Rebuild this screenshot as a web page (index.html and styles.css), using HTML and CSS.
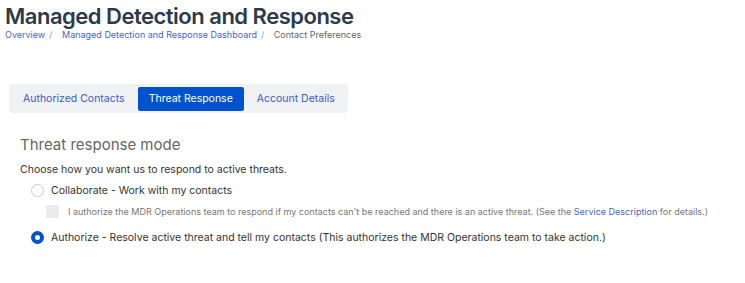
FILE: index.html
```html
<!DOCTYPE html>
<html lang="en">
<head>
    <meta charset="UTF-8">
    <meta name="viewport" content="width=device-width, initial-scale=1.0">
    <title>Contact Preferences</title>
    <link rel="stylesheet" href="styles.css">
</head>
<body>

    <!-- Page header -->
    <div class="page-header">
        <h1>Managed Detection and Response</h1>
        <div class="breadcrumb">
            <a href="#">Overview</a><span class="sep">/</span>
            <a href="#">Managed Detection and Response Dashboard</a><span class="sep">/</span>
            <span class="current">Contact Preferences</span>
        </div>
    </div>

    <!-- Tabs -->
    <div class="tabs">
        <button class="tab">Authorized Contacts</button>
        <button class="tab active">Threat Response</button>
        <button class="tab">Account Details</button>
    </div>

    <!-- Threat response mode -->
    <div class="section">
        <h2>Threat response mode</h2>
        <p class="hint">Choose how you want us to respond to active threats.</p>

        <label class="radio-row">
            <span class="radio"></span>
            Collaborate - Work with my contacts
        </label>

        <label class="check-row">
            <span class="checkbox"></span>
            <span>I authorize the MDR Operations team to respond if my contacts can't be reached and there is an active threat. (See the <a href="#">Service Description</a> for details.)</span>
        </label>

        <label class="radio-row">
            <span class="radio checked"></span>
            Authorize - Resolve active threat and tell my contacts (This authorizes the MDR Operations team to take action.)
        </label>
    </div>

</body>
</html>
```

FILE: styles.css
```css
/* General */
body {
    font-family: Inter, "Noto Sans", sans-serif;
    margin: 0;
    padding: 0;
    background-color: #ffffff;
    color: #333333;
}

a {
    color: #3a5bc7;
    text-decoration: none;
}

/* Header */
.page-header {
    padding: 3px 5px 0;
}

.page-header h1 {
    margin: 0;
    font-size: 22px;
    font-weight: 600;
    line-height: 26px;
    color: #2c3a4b;
    letter-spacing: -0.5px;
}

.breadcrumb {
    font-size: 9px;
    line-height: 12px;
    color: #666666;
}

.breadcrumb a {
    color: #4664c8;
}

.breadcrumb .sep {
    color: #999999;
    margin: 0 7px 0 4px;
}

/* Tabs */
.tabs {
    display: inline-flex;
    gap: 2px;
    margin: 43px 0 0 9px;
    padding: 3px 2px 2px 3px;
    background-color: #f0f1f3;
    border-radius: 4px;
}

.tab {
    font-family: inherit;
    font-size: 10.5px;
    line-height: 24px;
    padding: 0 11px;
    border: none;
    border-radius: 2px;
    background: transparent;
    color: #3b5cc4;
    white-space: nowrap;
    cursor: pointer;
}

.tab.active {
    background-color: #0053cc;
    color: #ffffff;
}

/* Section */
.section {
    padding: 22px 20px 0;
}

.section h2 {
    margin: 0;
    font-size: 15px;
    font-weight: 400;
    line-height: 20px;
    color: #666666;
}

.hint {
    margin: 7px 0 6px;
    font-size: 10.5px;
    line-height: 15px;
    color: #333333;
}

.radio-row {
    display: flex;
    align-items: center;
    gap: 7px;
    margin-left: 11px;
    font-size: 10.5px;
    line-height: 15px;
    color: #333333;
}

.radio {
    width: 11px;
    height: 11px;
    border: 1px solid #c8ccd2;
    border-radius: 50%;
    background: #ffffff;
}

.radio.checked {
    width: 5px;
    height: 5px;
    border: 4px solid #0053cc;
    background: #ffffff;
}

.check-row {
    display: flex;
    align-items: center;
    gap: 9px;
    margin: 7px 0 12px 26px;
    font-size: 9px;
    line-height: 13px;
    color: #777777;
}

.checkbox {
    flex: none;
    width: 13px;
    height: 13px;
    border-radius: 2px;
    background: #e9ebee;
}

.check-row a {
    color: #4664c8;
}
```
